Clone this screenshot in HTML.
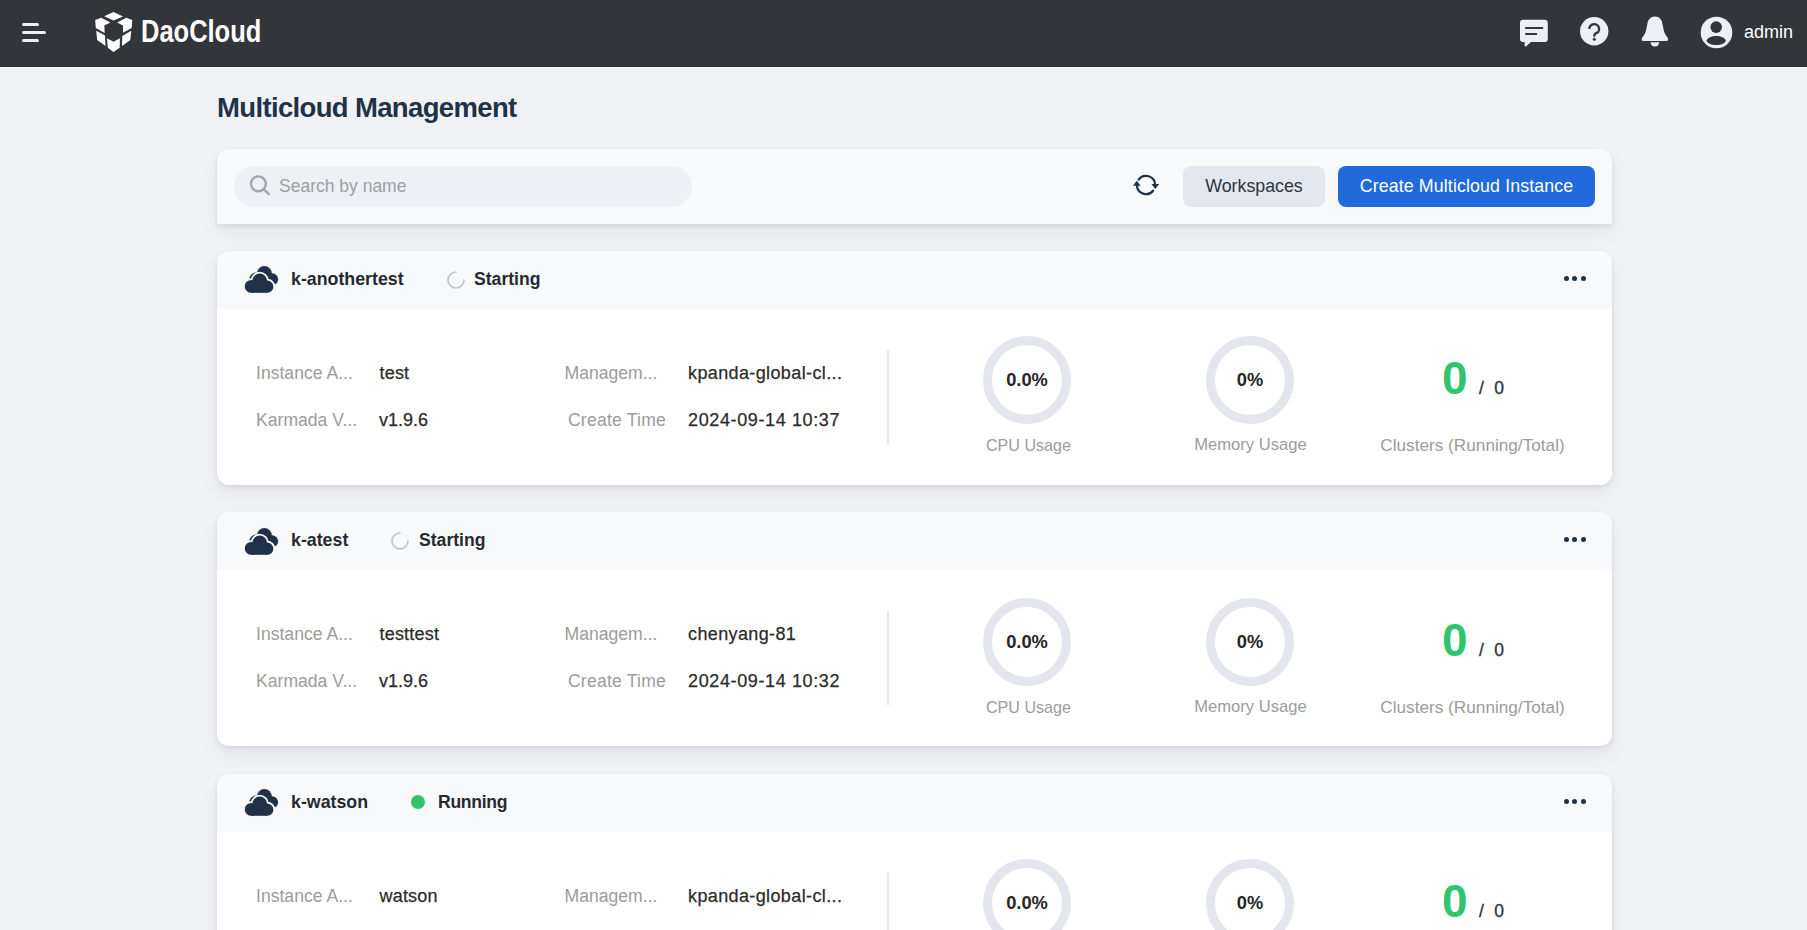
<!DOCTYPE html>
<html><head><meta charset="utf-8"><title>Multicloud Management</title>
<style>
*{box-sizing:border-box}
html,body{margin:0;padding:0}
body{width:1807px;height:930px;overflow:hidden;background:#f1f2f6;font-family:"Liberation Sans",sans-serif;position:relative}
.abs{position:absolute}
.hdr{position:absolute;left:0;top:0;width:1807px;height:67px;background:#32353a;border-bottom:1px solid #2a2d31}
.title{position:absolute;left:217px;top:92.7px;font-size:27.5px;line-height:30px;letter-spacing:-0.65px;font-weight:bold;color:#1f3248;white-space:nowrap}
.tool{position:absolute;left:217px;top:149px;width:1395px;height:75px;background:#f8f9fb;border-radius:12px 12px 0 0;box-shadow:0 2px 5px rgba(20,30,50,0.09),0 9px 18px rgba(20,30,50,0.06)}
.search{position:absolute;left:234px;top:166px;width:458px;height:41px;border-radius:21px;background:#edf0f5}
.ph{position:absolute;left:279px;top:176px;font-size:17.5px;line-height:20px;color:#9d9fa3;white-space:nowrap}
.btn{position:absolute;top:166px;height:41px;border-radius:8px;font-size:17.8px;line-height:41px;text-align:center;white-space:nowrap}
.card{position:absolute;left:217px;width:1395px;height:234px;background:#ffffff;border-radius:12px;box-shadow:0 2px 5px rgba(20,30,50,0.09),0 9px 18px rgba(20,30,50,0.06);overflow:hidden}
.chead{position:absolute;left:0;top:0;width:100%;height:58px;background:#f8f9fb}
.nm{position:absolute;font-size:17.8px;line-height:20px;font-weight:bold;color:#262a30;white-space:nowrap}
.st{position:absolute;font-size:17.6px;line-height:20px;font-weight:bold;color:#262a30;white-space:nowrap}
.dots{position:absolute;left:1563px;width:25px;height:6px}
.dots i{position:absolute;top:0;width:5.2px;height:5.2px;border-radius:50%;background:#1f3248}
.dots i:nth-child(1){left:0.5px} .dots i:nth-child(2){left:9.2px} .dots i:nth-child(3){left:17.9px}
.lb{position:absolute;width:101px;font-size:17.6px;line-height:20px;color:#9c9c9c;white-space:nowrap}
.lb.r{text-align:right}
.vl{position:absolute;font-size:18px;line-height:20px;color:#2b2b2b;white-space:nowrap;-webkit-text-stroke:0.25px #2b2b2b}
.vl.w{}
.divd{position:absolute;left:887px;width:2px;height:94px;background:#e2e5ee}
.pct{position:absolute;width:88px;text-align:center;font-size:18.3px;line-height:20px;font-weight:bold;color:#262626}
.cap{position:absolute;width:223px;text-align:center;font-size:16.6px;line-height:20px;color:#9c9c9c;white-space:nowrap}
.big{position:absolute;font-size:46px;line-height:48px;font-weight:bold;color:#30c46c}
.slash{position:absolute;font-size:17.5px;line-height:20px;font-weight:normal;-webkit-text-stroke:0.35px #2d3645;color:#2d3645;white-space:nowrap;word-spacing:5.5px}
</style></head><body>
<div class="hdr"></div>
<svg style="position:absolute;left:0;top:0" width="60" height="67" viewBox="0 0 60 67">
<g stroke="#eceff5" stroke-width="3.2" stroke-linecap="round">
<line x1="23.6" y1="24.5" x2="37.4" y2="24.5"/>
<line x1="23.6" y1="32.5" x2="44.4" y2="32.5"/>
<line x1="23.6" y1="40.5" x2="37.4" y2="40.5"/>
</g></svg>
<svg style="position:absolute;left:90px;top:8px" width="48" height="48" viewBox="0 0 48 48" fill="#ffffff"><polygon points="14.2,8.3 23.5,4.1 33,8.5 23.5,12.6"/><polygon points="5.2,12.1 11.1,9.8 20.4,14.6 14.3,17.4 14.7,25 5.8,20.1"/><polygon points="42.3,12.1 36.4,9.8 27.1,14.6 33,17.4 33,24.8 41.7,20.1"/><polygon points="6.2,22.7 15,27.6 15.5,37.9 7.2,32"/><polygon points="41.3,22.7 32.3,27.9 32,37.9 40.3,32"/><polygon points="17,30.2 23.5,33.8 29.9,30.2 29.7,39.7 23.5,43.9 17.8,39.7"/></svg>
<div class="abs" style="left:141px;top:14.5px;font-size:31px;line-height:34px;font-weight:bold;color:#ffffff;transform:scaleX(0.822);transform-origin:0 0;white-space:nowrap">DaoCloud</div>

<svg style="position:absolute;left:1515px;top:15px" width="36" height="36" viewBox="1515 15 36 36">
<path fill="#eceff5" d="M1523,19.8 H1544.8 A3,3 0 0 1 1547.8,22.8 V38.9 A3,3 0 0 1 1544.8,41.9 H1531 L1526,46.4 Q1524.6,47 1524.6,45.5 V41.9 H1523 A3,3 0 0 1 1520,38.9 V22.8 A3,3 0 0 1 1523,19.8 Z"/>
<g stroke="#32353a" stroke-width="2.2" stroke-linecap="round"><line x1="1526" y1="28" x2="1542.2" y2="28"/><line x1="1526" y1="34" x2="1536.2" y2="34"/></g>
</svg>
<svg style="position:absolute;left:1575px;top:12px" width="40" height="40" viewBox="1575 12 40 40">
<circle cx="1594.2" cy="31.2" r="14.2" fill="#eceff5"/>
<path d="M1589.3,28 A5,5 0 1 1 1598.1,32.2 Q1594.3,33.6 1594.3,35.8" fill="none" stroke="#32353a" stroke-width="2.3" stroke-linecap="round"/>
<circle cx="1594.3" cy="39.3" r="1.5" fill="#32353a"/>
</svg>
<svg style="position:absolute;left:1635px;top:12px" width="40" height="40" viewBox="1635 12 40 40">
<path fill="#eceff5" d="M1655,16.6 C1659.6,16.6 1661.8,20 1662.3,23.5 L1663.8,30.5 C1664.5,34 1666.5,36 1667.8,38 Q1668.8,40.9 1666.5,40.9 H1643.3 Q1641,40.9 1642,38 C1643.3,36 1645.3,34 1646,30.5 L1647.5,23.5 C1648,20 1650.4,16.6 1655,16.6 Z"/>
<path fill="#eceff5" d="M1650.5,42.2 H1659.3 A4.4,4.2 0 0 1 1650.5,42.2 Z"/>
</svg>
<svg style="position:absolute;left:1695px;top:10px" width="44" height="44" viewBox="1695 10 44 44">
<circle cx="1716.5" cy="32.5" r="15.8" fill="#eceff5"/>
<circle cx="1716.2" cy="27.1" r="5.8" fill="#32353a"/>
<ellipse cx="1716.2" cy="40.6" rx="9.6" ry="4.5" fill="#32353a"/>
</svg>
<div class="abs" style="left:1744px;top:22px;font-size:18px;line-height:20px;color:#ffffff;white-space:nowrap">admin</div>

<div class="title">Multicloud Management</div>

<div class="tool"></div>
<div class="search"></div>
<svg style="position:absolute;left:248px;top:173px" width="24" height="24" viewBox="248 173 24 24">
<circle cx="258.4" cy="183.8" r="7.4" fill="none" stroke="#a3a6ab" stroke-width="2.4"/>
<line x1="264" y1="189.4" x2="268.8" y2="194.2" stroke="#a3a6ab" stroke-width="2.6" stroke-linecap="round"/>
</svg>
<div class="ph">Search by name</div>
<svg style="position:absolute;left:1130px;top:171px" width="32" height="28" viewBox="1130 171 32 28">
<g fill="none" stroke="#1f3248" stroke-width="2.2" stroke-linecap="round">
<path d="M1138.73,179.52 A9.1,9.1 0 0 1 1155.1,184.6"/>
<path d="M1153.07,190.73 A9.1,9.1 0 0 1 1136.9,185.4"/>
</g>
<g fill="#1f3248"><polygon points="1151.4,184.1 1159.1,184.1 1155.2,189"/><polygon points="1133,185.7 1140.6,185.7 1136.8,180.8"/></g>
</svg>
<div class="btn" style="left:1183px;width:142px;background:#e4e7ed;color:#2d3440">Workspaces</div>
<div class="btn" style="left:1338px;width:257px;background:#2269dc;color:#ffffff;letter-spacing:0.12px">Create Multicloud Instance</div>


<div class="card" style="top:251px">
  <div class="chead"></div>
</div>
<svg style="position:absolute;left:243px;top:263px" width="38" height="32" viewBox="243 263 38 32"><g fill="#1f3248"><circle cx="255.89999999999998" cy="279.0" r="6.4"/><circle cx="264.4" cy="273.5" r="7.4"/><circle cx="272.0" cy="279.3" r="6.1"/><rect x="255.89999999999998" y="279.0" width="16.1" height="6.4"/></g><g fill="#1f3248" stroke="#f8f9fb" stroke-width="3.6"><circle cx="251.2" cy="286.4" r="6.4"/><circle cx="259.7" cy="280.9" r="7.4"/><circle cx="267.3" cy="286.7" r="6.1"/><rect x="251.2" y="286.4" width="16.1" height="6.4"/></g><g fill="#1f3248"><circle cx="251.2" cy="286.4" r="6.4"/><circle cx="259.7" cy="280.9" r="7.4"/><circle cx="267.3" cy="286.7" r="6.1"/><rect x="251.2" y="286.4" width="16.1" height="6.4"/></g></svg>
<div class="nm" style="left:291px;top:269px">k-anothertest</div>
<svg style="position:absolute;left:446px;top:270px" width="20" height="20" viewBox="0 0 20 20">
<path d="M10,2 A8,8 0 1 0 18,10" fill="none" stroke="#c0c5cd" stroke-width="1.7" stroke-linecap="round"/>
</svg><div class="st" style="left:474px;top:269px">Starting</div>
<div class="dots" style="top:276px"><i></i><i></i><i></i></div>
<div class="lb" style="left:256px;top:363px">Instance A...</div>
<div class="vl" style="left:379.5px;top:363px;letter-spacing:0.2px">test</div>
<div class="lb" style="left:256px;top:410px">Karmada V...</div>
<div class="vl" style="left:379px;top:410px">v1.9.6</div>
<div class="lb" style="left:564.5px;top:363px">Managem...</div>
<div class="vl" style="left:688px;top:363px;letter-spacing:0.38px">kpanda-global-cl...</div>
<div class="lb r" style="left:565px;top:410px;letter-spacing:0.2px">Create Time</div>
<div class="vl" style="left:688px;top:410px;letter-spacing:0.62px">2024-09-14 10:37</div>
<div class="divd" style="top:350px"></div>
<svg style="position:absolute;left:983px;top:336px" width="88" height="88" viewBox="0 0 88 88"><circle cx="44" cy="44" r="39.5" fill="none" stroke="#e3e6ed" stroke-width="9"/></svg>
<div class="pct" style="left:983px;top:370px">0.0%</div>
<div class="cap" style="left:917px;top:435px;font-size:16.1px">CPU Usage</div>
<svg style="position:absolute;left:1206px;top:336px" width="88" height="88" viewBox="0 0 88 88"><circle cx="44" cy="44" r="39.5" fill="none" stroke="#e3e6ed" stroke-width="9"/></svg>
<div class="pct" style="left:1206px;top:370px">0%</div>
<div class="cap" style="left:1139px;top:435px">Memory Usage</div>
<div class="big" style="left:1442px;top:354px">0</div>
<div class="slash" style="left:1479px;top:378px">/ 0</div>
<div class="cap" style="left:1361px;top:435px;font-size:17.2px">Clusters (Running/Total)</div>


<div class="card" style="top:512px">
  <div class="chead"></div>
</div>
<svg style="position:absolute;left:243px;top:525px" width="38" height="32" viewBox="243 263 38 32"><g fill="#1f3248"><circle cx="255.89999999999998" cy="279.0" r="6.4"/><circle cx="264.4" cy="273.5" r="7.4"/><circle cx="272.0" cy="279.3" r="6.1"/><rect x="255.89999999999998" y="279.0" width="16.1" height="6.4"/></g><g fill="#1f3248" stroke="#f8f9fb" stroke-width="3.6"><circle cx="251.2" cy="286.4" r="6.4"/><circle cx="259.7" cy="280.9" r="7.4"/><circle cx="267.3" cy="286.7" r="6.1"/><rect x="251.2" y="286.4" width="16.1" height="6.4"/></g><g fill="#1f3248"><circle cx="251.2" cy="286.4" r="6.4"/><circle cx="259.7" cy="280.9" r="7.4"/><circle cx="267.3" cy="286.7" r="6.1"/><rect x="251.2" y="286.4" width="16.1" height="6.4"/></g></svg>
<div class="nm" style="left:291px;top:530px">k-atest</div>
<svg style="position:absolute;left:390px;top:531px" width="20" height="20" viewBox="0 0 20 20">
<path d="M10,2 A8,8 0 1 0 18,10" fill="none" stroke="#c0c5cd" stroke-width="1.7" stroke-linecap="round"/>
</svg><div class="st" style="left:419px;top:530px">Starting</div>
<div class="dots" style="top:537px"><i></i><i></i><i></i></div>
<div class="lb" style="left:256px;top:624px">Instance A...</div>
<div class="vl" style="left:379.5px;top:624px;letter-spacing:0.2px">testtest</div>
<div class="lb" style="left:256px;top:671px">Karmada V...</div>
<div class="vl" style="left:379px;top:671px">v1.9.6</div>
<div class="lb" style="left:564.5px;top:624px">Managem...</div>
<div class="vl" style="left:688px;top:624px;letter-spacing:0.38px">chenyang-81</div>
<div class="lb r" style="left:565px;top:671px;letter-spacing:0.2px">Create Time</div>
<div class="vl" style="left:688px;top:671px;letter-spacing:0.62px">2024-09-14 10:32</div>
<div class="divd" style="top:611px"></div>
<svg style="position:absolute;left:983px;top:598px" width="88" height="88" viewBox="0 0 88 88"><circle cx="44" cy="44" r="39.5" fill="none" stroke="#e3e6ed" stroke-width="9"/></svg>
<div class="pct" style="left:983px;top:632px">0.0%</div>
<div class="cap" style="left:917px;top:697px;font-size:16.1px">CPU Usage</div>
<svg style="position:absolute;left:1206px;top:598px" width="88" height="88" viewBox="0 0 88 88"><circle cx="44" cy="44" r="39.5" fill="none" stroke="#e3e6ed" stroke-width="9"/></svg>
<div class="pct" style="left:1206px;top:632px">0%</div>
<div class="cap" style="left:1139px;top:697px">Memory Usage</div>
<div class="big" style="left:1442px;top:616px">0</div>
<div class="slash" style="left:1479px;top:640px">/ 0</div>
<div class="cap" style="left:1361px;top:697px;font-size:17.2px">Clusters (Running/Total)</div>


<div class="card" style="top:774px">
  <div class="chead"></div>
</div>
<svg style="position:absolute;left:243px;top:786px" width="38" height="32" viewBox="243 263 38 32"><g fill="#1f3248"><circle cx="255.89999999999998" cy="279.0" r="6.4"/><circle cx="264.4" cy="273.5" r="7.4"/><circle cx="272.0" cy="279.3" r="6.1"/><rect x="255.89999999999998" y="279.0" width="16.1" height="6.4"/></g><g fill="#1f3248" stroke="#f8f9fb" stroke-width="3.6"><circle cx="251.2" cy="286.4" r="6.4"/><circle cx="259.7" cy="280.9" r="7.4"/><circle cx="267.3" cy="286.7" r="6.1"/><rect x="251.2" y="286.4" width="16.1" height="6.4"/></g><g fill="#1f3248"><circle cx="251.2" cy="286.4" r="6.4"/><circle cx="259.7" cy="280.9" r="7.4"/><circle cx="267.3" cy="286.7" r="6.1"/><rect x="251.2" y="286.4" width="16.1" height="6.4"/></g></svg>
<div class="nm" style="left:291px;top:792px">k-watson</div>
<div style="position:absolute;left:411px;top:794.7px;width:14px;height:14px;border-radius:50%;background:#2fc46b"></div><div class="st" style="left:438px;top:792px;letter-spacing:-0.3px">Running</div>
<div class="dots" style="top:799px"><i></i><i></i><i></i></div>
<div class="lb" style="left:256px;top:886px">Instance A...</div>
<div class="vl" style="left:379.5px;top:886px;letter-spacing:0.2px">watson</div>
<div class="lb" style="left:256px;top:933px">Karmada V...</div>
<div class="vl" style="left:379px;top:933px">v1.9.6</div>
<div class="lb" style="left:564.5px;top:886px">Managem...</div>
<div class="vl" style="left:688px;top:886px;letter-spacing:0.38px">kpanda-global-cl...</div>
<div class="lb r" style="left:565px;top:933px;letter-spacing:0.2px">Create Time</div>
<div class="vl" style="left:688px;top:933px;letter-spacing:0.62px">2024-09-14 10:12</div>
<div class="divd" style="top:873px"></div>
<svg style="position:absolute;left:983px;top:859px" width="88" height="88" viewBox="0 0 88 88"><circle cx="44" cy="44" r="39.5" fill="none" stroke="#e3e6ed" stroke-width="9"/></svg>
<div class="pct" style="left:983px;top:893px">0.0%</div>
<div class="cap" style="left:917px;top:958px;font-size:16.1px">CPU Usage</div>
<svg style="position:absolute;left:1206px;top:859px" width="88" height="88" viewBox="0 0 88 88"><circle cx="44" cy="44" r="39.5" fill="none" stroke="#e3e6ed" stroke-width="9"/></svg>
<div class="pct" style="left:1206px;top:893px">0%</div>
<div class="cap" style="left:1139px;top:958px">Memory Usage</div>
<div class="big" style="left:1442px;top:877px">0</div>
<div class="slash" style="left:1479px;top:901px">/ 0</div>
<div class="cap" style="left:1361px;top:958px;font-size:17.2px">Clusters (Running/Total)</div>

</body></html>
